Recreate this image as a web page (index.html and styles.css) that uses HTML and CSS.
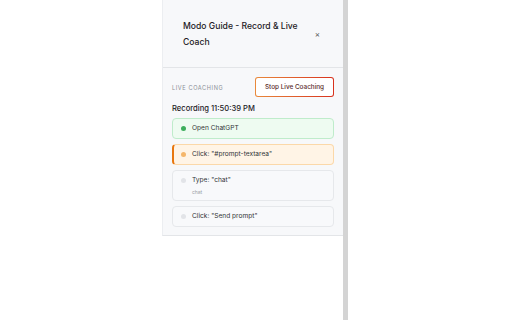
FILE: index.html
```html
<!DOCTYPE html>
<html lang="en">
<head>
    <meta charset="UTF-8">
    <title>Modo Guide - Record &amp; Live Coach</title>
    <link rel="stylesheet" href="styles.css">
</head>
<body>
    <div class="frame">
        <div class="gutter"></div>
        <div class="panel">
            <div class="box">
                <!-- Header -->
                <div class="header">
                    <h1>Modo Guide - Record &amp; Live Coach</h1>
                    <span class="close">&times;</span>
                </div>

                <!-- Live coaching section -->
                <div class="section">
                    <div class="section-top">
                        <span class="label">Live Coaching</span>
                        <button class="stop">Stop Live Coaching</button>
                    </div>
                    <p class="recording">Recording 11:50:39 PM</p>

                    <div class="step done">
                        <span class="dot"></span>
                        <div class="step-body">
                            <div class="step-text">Open ChatGPT</div>
                        </div>
                    </div>
                    <div class="step active">
                        <span class="dot"></span>
                        <div class="step-body">
                            <div class="step-text">Click: "#prompt-textarea"</div>
                        </div>
                    </div>
                    <div class="step">
                        <span class="dot"></span>
                        <div class="step-body">
                            <div class="step-text">Type: "chat"</div>
                            <div class="step-sub">chat</div>
                        </div>
                    </div>
                    <div class="step">
                        <span class="dot"></span>
                        <div class="step-body">
                            <div class="step-text">Click: "Send prompt"</div>
                        </div>
                    </div>
                </div>
            </div>
        </div>
        <div class="scrollbar"></div>
    </div>
</body>
</html>
```

FILE: styles.css
```css
body {
    margin: 0;
    background: #ffffff;
    font-family: Inter, "Liberation Sans", sans-serif;
    color: #1f2328;
}
.frame {
    display: flex;
    height: 320px;
}
.gutter {
    width: 162px;
}
.panel {
    width: 181px;
}
.box {
    background: #f7f8fa;
    border-left: 1px solid #eceef1;
    border-bottom: 1px solid #e3e5e8;
}
.scrollbar {
    width: 5px;
    background: #d4d4d4;
}
.header {
    height: 68px;
    display: flex;
    align-items: center;
    padding: 1px 0 0 20px;
    border-bottom: 1px solid #e3e5e8;
    box-sizing: border-box;
}
h1 {
    flex: 1;
    margin: 0;
    font-size: 8.6px;
    font-weight: 500;
    line-height: 16px;
    color: #1d2125;
    padding-right: 8px;
}
.close {
    font-size: 8px;
    color: #555;
    margin-right: 23px;
}
.section {
    padding: 9px 9px 8px 9px;
}
.section-top {
    display: flex;
    align-items: center;
    justify-content: space-between;
}
.label {
    font-size: 5.6px;
    font-weight: 400;
    letter-spacing: 0.6px;
    text-transform: uppercase;
    color: #8a8f96;
    margin-top: 2px;
}
.stop {
    font-family: Inter, "Liberation Sans", sans-serif;
    font-size: 6.4px;
    font-weight: 500;
    color: #5a2b2b;
    background: #ffffff;
    border: 1px solid transparent;
    border-radius: 3px;
    width: 79px;
    height: 20px;
    padding: 0;
    background-image: linear-gradient(#fff, #fff), linear-gradient(90deg, #e98a3c, #d8321e);
    background-origin: border-box;
    background-clip: padding-box, border-box;
}
.recording {
    margin: 7px 0 5px;
    font-size: 7.6px;
    font-weight: 500;
    color: #1d2125;
}
.step {
    display: flex;
    align-items: flex-start;
    background: #f8f9fb;
    border: 1px solid #e6e8eb;
    border-radius: 4px;
    padding: 5px 8px 5px 8px;
    margin-bottom: 5px;
}
.step:last-child {
    margin-bottom: 0;
}
.dot {
    width: 5px;
    height: 5px;
    border-radius: 50%;
    background: #e2e4e8;
    margin: 2px 6px 0 0;
    flex-shrink: 0;
}
.step-text {
    font-size: 6.6px;
    line-height: 9px;
    color: #303336;
}
.step-sub {
    font-size: 5px;
    line-height: 6px;
    color: #9a9ea5;
    margin-top: 4px;
}
.step.done {
    background: #eefbf1;
    border-color: #bfeccb;
}
.step.done .dot {
    background: #3dae5c;
}
.step.active {
    background: #fff4e6;
    border-color: #fbd8a9;
    border-left: 2px solid #e8770f;
    padding-left: 7px;
}
.step.active .dot {
    background: #f5b66a;
}
```
